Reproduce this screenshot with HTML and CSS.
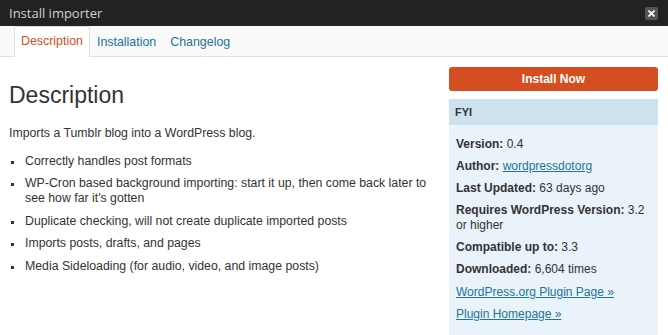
FILE: index.html
```html
<!DOCTYPE html>
<html>
<head>
<meta charset="utf-8">
<title>Install importer</title>
<link rel="stylesheet" href="styles.css">
</head>
<body>
<div class="titlebar">
  <span class="title">Install importer</span>
  <span class="close" aria-label="Close">
    <svg width="7" height="7" viewBox="0 0 7 7"><path d="M0.5 0.5 L6.5 6.5 M6.5 0.5 L0.5 6.5" stroke="#fff" stroke-width="1.6" fill="none"/></svg>
  </span>
</div>
<nav class="tabs">
  <a class="tab active">Description</a>
  <a class="tab">Installation</a>
  <a class="tab">Changelog</a>
</nav>
<div class="content">
  <main class="main">
    <h2 class="heading">Description</h2>
    <p class="intro">Imports a Tumblr blog into a WordPress blog.</p>
    <ul class="features">
      <li>Correctly handles post formats</li>
      <li>WP-Cron based background importing: start it up, then come back later to see how far it's gotten</li>
      <li>Duplicate checking, will not create duplicate imported posts</li>
      <li>Imports posts, drafts, and pages</li>
      <li>Media Sideloading (for audio, video, and image posts)</li>
    </ul>
  </main>
  <aside class="sidebar">
    <a class="install">Install Now</a>
    <div class="fyi">
      <div class="fyi-head">FYI</div>
      <ul class="fyi-list">
        <li><b>Version:</b> 0.4</li>
        <li><b>Author:</b> <a class="link">wordpressdotorg</a></li>
        <li><b>Last Updated:</b> 63 days ago</li>
        <li><b>Requires WordPress Version:</b> 3.2 or higher</li>
        <li><b>Compatible up to:</b> 3.3</li>
        <li><b>Downloaded:</b> 6,604 times</li>
        <li><a class="link">WordPress.org Plugin Page »</a></li>
        <li><a class="link">Plugin Homepage »</a></li>
      </ul>
    </div>
  </aside>
</div>
</body>
</html>
```

FILE: styles.css
```css
html, body {
  margin: 0;
  padding: 0;
  background: #fff;
  overflow: hidden;
}
body {
  font-family: "Liberation Sans", Arial, sans-serif;
  color: #333;
}
.titlebar {
  height: 26px;
  background: #222;
  display: flex;
  align-items: center;
  justify-content: space-between;
  padding: 0 10px 0 9px;
}
.title {
  font-family: "Open Sans", "Liberation Sans", sans-serif;
  font-size: 13px;
  color: #d0d0d0;
  line-height: 26px;
}
.close {
  width: 13px;
  height: 13px;
  background: #555;
  border-radius: 2px;
  display: flex;
  align-items: center;
  justify-content: center;
}
.tabs {
  height: 30px;
  background: #f9f9f9;
  border-bottom: 1px solid #dfdfdf;
  display: flex;
  align-items: flex-end;
  padding-left: 14px;
}
.tab {
  font-size: 12.4px;
  color: #21759b;
  padding: 0 6px;
  height: 29px;
  line-height: 29px;
  border: 1px solid transparent;
  border-bottom: none;
  margin-bottom: -1px;
  box-sizing: content-box;
}
.tab.active {
  color: #d54e21;
  background: #fff;
  border-color: #dfdfdf;
  border-radius: 3px 3px 0 0;
  height: 30px;
}
.content {
  display: flex;
  align-items: flex-start;
}
.main {
  width: 431px;
  padding-left: 9px;
}
.heading {
  font-size: 23px;
  font-weight: normal;
  line-height: 29px;
  margin: 24px 0 15px;
  color: #333;
}
.intro {
  font-size: 12.3px;
  line-height: 16px;
  margin: 0 0 12.5px;
}
.features {
  list-style: none;
  margin: 0;
  padding: 0 0 0 16px;
  font-size: 12.3px;
  line-height: 15.5px;
}
.features li {
  position: relative;
  margin-bottom: 6.9px;
}
.features li::before {
  content: "";
  position: absolute;
  left: -14px;
  top: 7px;
  width: 3px;
  height: 3px;
  background: #333;
}
.sidebar {
  width: 209px;
  margin: 10px 10px 0 9px;
}
.install {
  display: block;
  height: 24px;
  line-height: 24px;
  background: #d54e21;
  border-radius: 3px;
  color: #fff;
  font-weight: bold;
  font-size: 12px;
  text-align: center;
}
.fyi {
  margin-top: 8px;
  background: #eaf2fa;
  height: 236px;
}
.fyi-head {
  height: 26px;
  line-height: 26px;
  background: #cee1ef;
  font-size: 11px;
  font-weight: bold;
  padding-left: 6px;
  color: #333;
}
.fyi-list {
  list-style: none;
  margin: 0;
  padding: 11.5px 7px 0 7px;
  font-size: 12px;
  line-height: 15.5px;
}
.fyi-list li {
  margin-bottom: 6.6px;
}
.link {
  color: #21759b;
  text-decoration: underline;
}
```
